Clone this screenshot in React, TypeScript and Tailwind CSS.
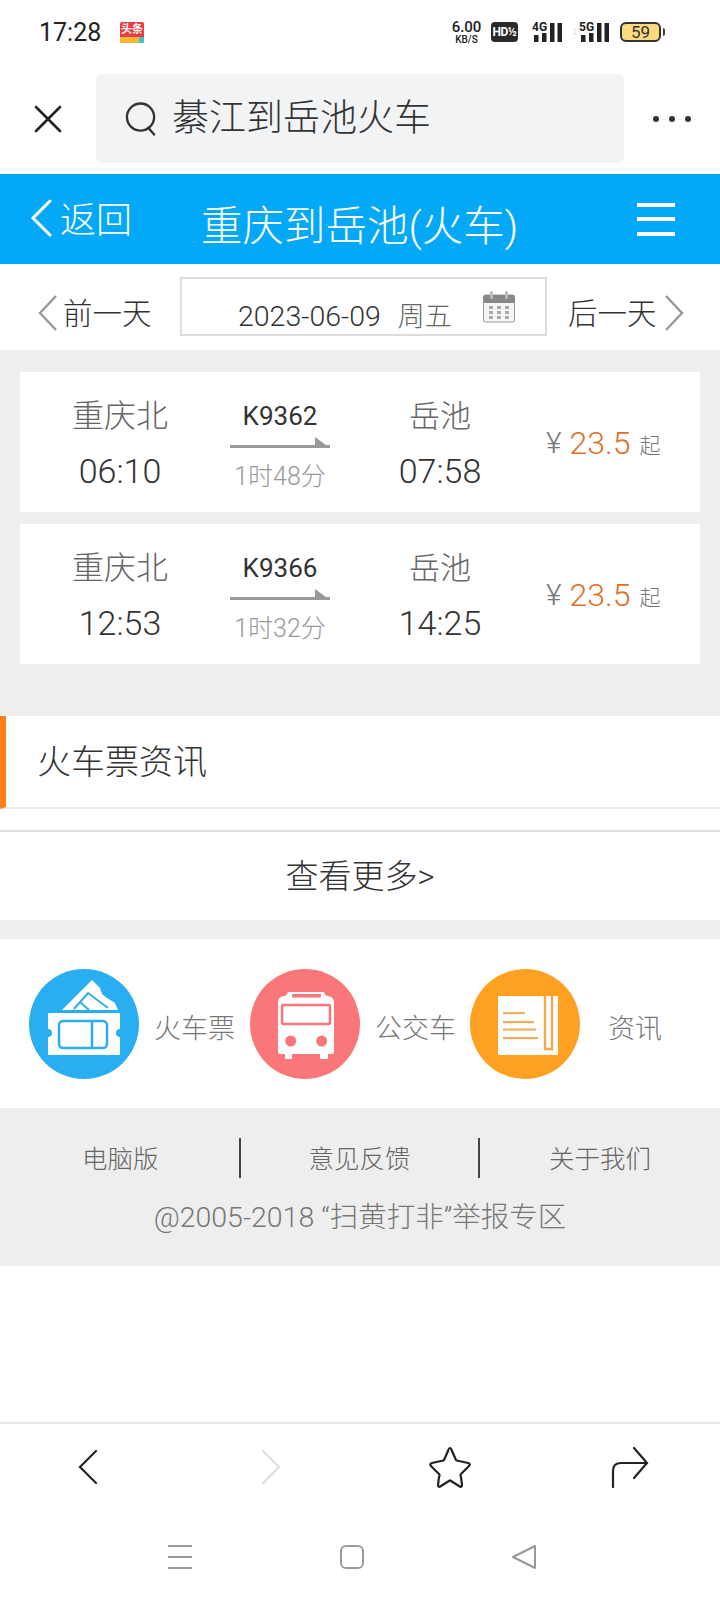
const font = 'Roboto, "Noto Sans CJK SC", "Noto Sans", sans-serif';

function StatusBar() {
  return (
    <div className="flex h-[74px] items-center pb-[10px] pl-[39px]">
      <span className="w-[81px] text-[25px] font-normal leading-none text-[#222]">17:28</span>
      <div className="flex h-[21px] w-[24px] flex-col overflow-hidden rounded-[2px] bg-[#ee3c3c]">
        <span className="flex-1 text-center text-[11px] font-bold leading-[15px] text-white">头条</span>
        <div className="flex h-[6px]">
          <span className="flex-1 bg-[#f7b733]" />
          <span className="w-[5px] bg-[#35c5d8]" />
        </div>
      </div>
      <div className="ml-[306px] flex w-[33px] flex-col items-center font-medium leading-none text-[#222]">
        <span className="text-[15px] leading-[14px]">6.00</span>
        <span className="text-[10px] leading-[11px]">KB/S</span>
      </div>
      <span className="ml-[8px] flex h-[20px] w-[27px] items-center justify-center rounded-[4px] bg-[#2a2a2a] text-[12px] font-bold tracking-[-0.5px] text-white">HD½</span>
      <Signal label="4G" className="ml-[14px]" />
      <span className="ml-[9px] flex h-[18px] w-[7px] items-center text-[7px] text-[#ccc]">↕</span>
      <Signal label="5G" className="ml-[1px]" />
      <div className="ml-[11px] flex h-[20px] w-[41px] items-center justify-center rounded-[6px] border-2 border-[#333] bg-[#fbd97f] text-[17px] font-normal leading-none text-[#333]">59</div>
      <span className="ml-[2px] h-[8px] w-[2px] rounded-r bg-[#444]" />
    </div>
  );
}

function Signal({ label, className }: { label: string; className: string }) {
  return (
    <div className={`relative h-[20px] w-[30px] ${className}`}>
      <span className="absolute left-0 top-[-1px] text-[12px] font-bold leading-none text-[#222]">{label}</span>
      <svg viewBox="0 0 30 20" className="absolute inset-0 h-[20px] w-[30px]" fill="#222">
        <rect x="2" y="13" width="4.5" height="7" />
        <rect x="10" y="11" width="4.5" height="9" />
        <rect x="18" y="1" width="4.5" height="19" />
        <rect x="25.5" y="1" width="4.5" height="19" />
      </svg>
    </div>
  );
}

function SearchRow() {
  return (
    <div className="flex h-[100px] items-start">
      <div className="flex h-[89px] w-[96px] items-center justify-center">
        <svg viewBox="0 0 30 30" className="h-[30px] w-[30px]" stroke="#222" strokeWidth="2.6" strokeLinecap="round">
          <path d="M3 3 L27 27 M27 3 L3 27" />
        </svg>
      </div>
      <div className="flex h-[89px] w-[528px] items-center rounded-[6px] bg-[#f1f3f5] pl-[29px]">
        <svg viewBox="0 0 34 36" className="h-[36px] w-[33px]" fill="none" stroke="#333" strokeWidth="2.4" strokeLinecap="round">
          <circle cx="16" cy="16" r="14" />
          <path d="M24 27 L30 34" />
        </svg>
        <span className="ml-[14px] text-[37px] leading-none text-[#333]">綦江到岳池火车</span>
      </div>
      <div className="flex h-[89px] flex-1 items-center justify-center gap-[10px]">
        <span className="h-[6px] w-[6px] rounded-full bg-[#333]" />
        <span className="h-[6px] w-[6px] rounded-full bg-[#333]" />
        <span className="h-[6px] w-[6px] rounded-full bg-[#333]" />
      </div>
    </div>
  );
}

function BlueHeader() {
  return (
    <div className="flex h-[90px] items-center bg-[#03a9f7] text-white">
      <div className="flex w-[201px] items-center pl-[30px]">
        <svg viewBox="0 0 22 38" className="mb-[2px] h-[38px] w-[22px]" fill="none" stroke="#fff" strokeWidth="3" strokeLinecap="round">
          <path d="M20 2 L3 19 L20 36" />
        </svg>
        <span className="ml-[8px] mt-[4px] text-[36px] leading-none">返回</span>
      </div>
      <div className="mt-[16px] w-[316px] whitespace-nowrap text-[41.5px] leading-none">重庆到岳池(火车)</div>
      <div className="ml-[120px] flex w-[38px] flex-col gap-[10.5px]">
        <span className="h-[4px] bg-white" />
        <span className="h-[4px] bg-white" />
        <span className="h-[4px] bg-white" />
      </div>
    </div>
  );
}

function DateRow() {
  return (
    <div className="flex h-[86px] items-start pt-[13px]">
      <div className="mt-[8px] flex h-[59px] w-[180px] items-center pl-[37px]">
        <svg viewBox="0 0 20 36" className="mb-[4px] h-[36px] w-[20px]" fill="none" stroke="#999" strokeWidth="2.4">
          <path d="M19 1 L3 18 L19 35" />
        </svg>
        <span className="ml-[6px] whitespace-nowrap text-[29.5px] leading-none text-[#333]">前一天</span>
      </div>
      <div className="flex h-[59px] w-[367px] items-center border-2 border-[#dcdcdc] pl-[56px]">
        <span className="mt-[22px] text-[28.5px] leading-none text-[#333]">2023-06-09</span>
        <span className="ml-[17px] mt-[22px] text-[27px] leading-none text-[#666]">周五</span>
        <svg viewBox="0 0 32 32" className="ml-[31px] h-[32px] w-[32px]">
          <rect x="0.5" y="4" width="31" height="27" rx="2" fill="#f5f5f5" stroke="#999" />
          <rect x="0" y="4" width="32" height="8" rx="2" fill="#888" />
          <rect x="7" y="0" width="3" height="8" rx="1.5" fill="#bbb" />
          <rect x="22" y="0" width="3" height="8" rx="1.5" fill="#bbb" />
          <g fill="#aaa">
            <rect x="6" y="15" width="4" height="3" /><rect x="14" y="15" width="4" height="3" /><rect x="22" y="15" width="4" height="3" />
            <rect x="6" y="20" width="4" height="3" /><rect x="14" y="20" width="4" height="3" /><rect x="22" y="20" width="4" height="3" />
            <rect x="6" y="25" width="4" height="3" /><rect x="14" y="25" width="4" height="3" /><rect x="22" y="25" width="4" height="3" />
          </g>
        </svg>
      </div>
      <div className="mt-[8px] flex h-[59px] flex-1 items-center pl-[21px]">
        <span className="whitespace-nowrap text-[29.5px] leading-none text-[#333]">后一天</span>
        <svg viewBox="0 0 20 36" className="mb-[4px] ml-[8px] h-[36px] w-[20px]" fill="none" stroke="#999" strokeWidth="2.4">
          <path d="M1 1 L17 18 L1 35" />
        </svg>
      </div>
    </div>
  );
}

function TrainCard({ no, dep, arr, dur }: { no: string; dep: string; arr: string; dur: string }) {
  return (
    <div className="grid h-[140px] grid-cols-[200px_120px_200px_160px] items-center bg-white">
      <div className="flex flex-col items-center pt-[4px]">
        <span className="mb-[2px] text-[32px] leading-[45px] text-[#666]">重庆北</span>
        <span className="mt-[8px] text-[34px] leading-[45px] text-[#333]">{dep}</span>
      </div>
      <div className="flex flex-col items-center pt-[12px]">
        <span className="mt-[-3px] text-[26px] font-normal leading-[36px] text-[#333]">{no}</span>
        <svg viewBox="0 0 100 12" className="mt-[3px] h-[12px] w-[100px]" fill="#999">
          <rect x="0" y="8" width="100" height="3" />
          <path d="M85 0 L100 11 L85 11 Z" />
        </svg>
        <span className="mt-[10px] whitespace-nowrap text-[25px] leading-[36px] text-[#999]">{dur}</span>
      </div>
      <div className="flex flex-col items-center pt-[4px]">
        <span className="mb-[2px] text-[31px] leading-[45px] text-[#666]">岳池</span>
        <span className="mt-[8px] text-[34px] leading-[45px] text-[#333]">{arr}</span>
      </div>
      <div className="flex items-center pl-[6px] pt-[2px]">
        <span className="text-[30px] leading-none text-[#777]">¥</span>
        <span className="ml-[8px] text-[32px] leading-none text-[#e0701f]">23.5</span>
        <span className="ml-[9px] mt-[6px] text-[21px] leading-none text-[#777]">起</span>
      </div>
    </div>
  );
}

function TicketIcon() {
  return (
    <svg viewBox="0 0 110 110" className="h-[110px] w-[110px]">
      <circle cx="55" cy="55" r="55" fill="#29aef2" />
      <path d="M33 41 L63 11 L71 19 L73 25 L78 29 L86 34 L89 41 Z" fill="#fff" />
      <path d="M45 40 L59 24 L79 39" fill="none" stroke="#29aef2" strokeWidth="2" />
      <path d="M51 33 L60 41" fill="none" stroke="#29aef2" strokeWidth="2" />
      <path d="M19 44 H91 V60 A4 4 0 0 0 91 68 V86 H19 V68 A4 4 0 0 0 19 60 Z" fill="#fff" />
      <rect x="30" y="52" width="48" height="27" rx="4" fill="#fff" stroke="#29aef2" strokeWidth="2.5" />
      <path d="M63 52 V79" stroke="#29aef2" strokeWidth="2.5" />
    </svg>
  );
}

function BusIcon() {
  return (
    <svg viewBox="0 0 110 110" className="h-[110px] w-[110px]">
      <circle cx="55" cy="55" r="55" fill="#fb7678" />
      <path d="M39 23 H74 Q75 27 78 27 Q84 28 84 33 V83 Q84 85 82 85 H30 Q28 85 28 83 V33 Q28 28 34 27 Q37 27 38 23 Z" fill="#fff" />
      <rect x="35" y="84" width="7" height="6" fill="#fff" />
      <rect x="70" y="84" width="8" height="6" fill="#fff" />
      <rect x="42" y="25" width="29" height="3.5" rx="1" fill="#fb7678" />
      <rect x="32" y="36" width="48" height="19" rx="1" fill="#fff" stroke="#fb7678" strokeWidth="2.5" />
      <circle cx="40.7" cy="72" r="5.5" fill="#fb7678" />
      <circle cx="71.7" cy="72" r="5.5" fill="#fb7678" />
    </svg>
  );
}

function NewsIcon() {
  return (
    <svg viewBox="0 0 110 110" className="h-[110px] w-[110px]">
      <circle cx="55" cy="55" r="55" fill="#fea122" />
      <rect x="28" y="27" width="60" height="59" rx="1" fill="#fff" />
      <path d="M75 27 V80 H82 V27" fill="none" stroke="#f3a94a" strokeWidth="2.4" />
      <g fill="#f0b060">
        <rect x="33" y="43" width="22" height="2.2" />
        <rect x="33" y="52" width="31" height="2.2" />
        <rect x="33" y="59.5" width="33" height="2.2" />
        <rect x="33" y="68" width="35" height="2.2" />
      </g>
    </svg>
  );
}

function QuickLinks() {
  return (
    <div className="flex h-[169px] items-center bg-white pl-[29px]">
      <TicketIcon />
      <span className="ml-[15px] mt-[12px] w-[96px] whitespace-nowrap text-[27px] leading-none text-[#777]">火车票</span>
      <BusIcon />
      <span className="ml-[15px] mt-[12px] w-[95px] whitespace-nowrap text-[27px] leading-none text-[#777]">公交车</span>
      <NewsIcon />
      <span className="ml-[28px] mt-[12px] whitespace-nowrap text-[27px] leading-none text-[#777]">资讯</span>
    </div>
  );
}

function Footer() {
  return (
    <div className="flex h-[158px] flex-col items-center bg-[#eeeeee] pt-[30px]">
      <div className="grid w-full grid-cols-[239px_241px_1fr] text-[25.5px] leading-[38px] text-[#666]">
        <span className="pl-[82px] pt-[2px] text-left">电脑版</span>
        <span className="border-x-2 border-[#444] pt-[2px] text-center">意见反馈</span>
        <span className="pl-[69px] pt-[2px] text-left">关于我们</span>
      </div>
      <div className="mt-[21px] whitespace-nowrap text-[28.5px] leading-[38px] text-[#777]">@2005-2018 “扫黄打非”举报专区</div>
    </div>
  );
}

function BottomBars() {
  return (
    <div className="border-t-2 border-[#e8e8e8]">
      <div className="flex h-[86px] items-center">
        <div className="flex w-[176px] justify-center">
          <svg viewBox="0 0 20 36" className="h-[36px] w-[20px]" fill="none" stroke="#222" strokeWidth="2.2" strokeLinecap="round">
            <path d="M18 2 L2 18 L18 34" />
          </svg>
        </div>
        <div className="flex w-[0px] justify-center">
          <svg viewBox="0 0 20 36" className="ml-[190px] h-[36px] w-[20px] shrink-0" fill="none" stroke="#ddd" strokeWidth="2.2" strokeLinecap="round">
            <path d="M2 2 L18 18 L2 34" />
          </svg>
        </div>
        <div className="ml-[252px] h-[42px] w-[44px]">
          <svg viewBox="0 0 44 42" className="h-[42px] w-[44px]" fill="none" stroke="#222" strokeWidth="2.2" strokeLinejoin="round">
            <path d="M22 2 Q23 2 24 5 L28 14 Q29 15 31 15 L40 17 Q43 18 41 20 L33 28 Q32 29 33 31 L34 39 Q34 42 31 40 L23 35 Q22 34 21 35 L13 40 Q10 42 10 39 L11 31 Q12 29 11 28 L3 20 Q1 18 4 17 L13 15 Q15 15 16 14 L20 5 Q21 2 22 2 Z" />
          </svg>
        </div>
        <div className="ml-[139px] h-[42px] w-[38px]">
          <svg viewBox="0 0 38 42" className="h-[42px] w-[38px]" fill="none" stroke="#222" strokeWidth="2.2" strokeLinecap="round">
            <path d="M2 41 V25 Q2 17 10 17 H35 M23 2 L36 17 L23 32" />
          </svg>
        </div>
      </div>
      <div className="flex h-[90px] items-start pt-[35px]">
        <div className="ml-[168px] flex h-[24px] w-[24px] flex-col justify-between">
          <span className="h-[2px] bg-[#999]" />
          <span className="h-[2px] bg-[#999]" />
          <span className="h-[2px] bg-[#999]" />
        </div>
        <div className="ml-[148px] h-[24px] w-[24px] rounded-[6px] border-2 border-[#999]" />
        <svg viewBox="0 0 24 24" className="ml-[148px] h-[24px] w-[24px]" fill="none" stroke="#999" strokeWidth="2" strokeLinejoin="round">
          <path d="M23 1 V23 L1 12 Z" />
        </svg>
      </div>
    </div>
  );
}

export default function App() {
  return (
    <div className="flex h-[1600px] w-[720px] flex-col overflow-hidden bg-white font-light" style={{ fontFamily: font }}>
      <StatusBar />
      <SearchRow />
      <BlueHeader />
      <DateRow />
      <div className="flex h-[366px] flex-col gap-[12px] bg-[#eeeeee] px-[20px] pt-[22px]">
        <TrainCard no="K9362" dep="06:10" arr="07:58" dur="1时48分" />
        <TrainCard no="K9366" dep="12:53" arr="14:25" dur="1时32分" />
      </div>
      <div className="flex h-[93px] items-center border-b-2 border-[#ececec] border-l-[6px] border-l-[#ff7f1a] pl-[31px]">
        <span className="text-[34px] leading-none text-[#333]">火车票资讯</span>
      </div>
      <div className="h-[21px]" />
      <div className="flex h-[90px] items-center justify-center border-t-2 border-[#dddddd]">
        <span className="text-[33px] leading-none text-[#333]">查看更多&gt;</span>
      </div>
      <div className="h-[19px] bg-[#eeeeee]" />
      <QuickLinks />
      <Footer />
      <div className="flex-1" />
      <BottomBars />
    </div>
  );
}
